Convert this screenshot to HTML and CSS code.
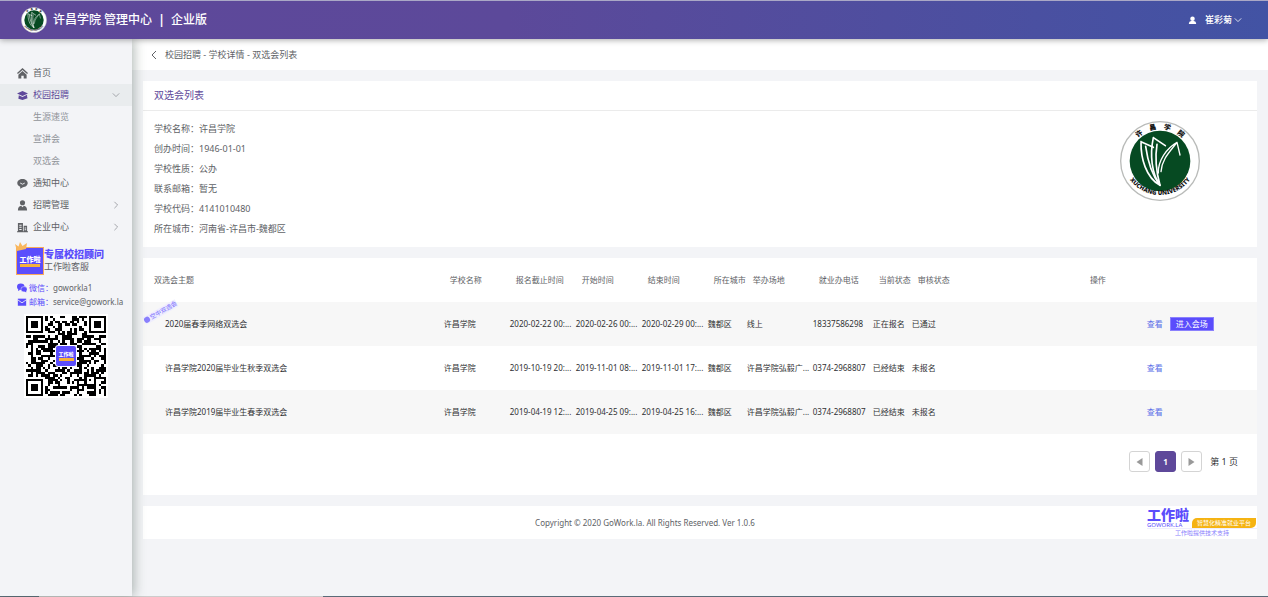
FILE: index.html
```html
<!DOCTYPE html>
<html lang="zh-CN">
<head>
    <meta charset="UTF-8">
    <meta name="viewport" content="width=device-width, initial-scale=1.0">
    <title>许昌学院 管理中心</title>
    <link rel="stylesheet" href="styles.css">
</head>
<body>
    <svg class="symbols" aria-hidden="true">
        <symbol id="seal" viewBox="60 46 240 244">
            <circle cx="180" cy="168" r="118" fill="#fff" stroke="#b9bbb9" stroke-width="4"/>
            <circle cx="180" cy="168" r="91" fill="#064a22"/>
            <g fill="none" stroke="#fff" stroke-linejoin="round" stroke-linecap="round">
                <path stroke-width="5" d="M123 110C122 160 138 218 180 241C154 208 143 168 137 124M123 110L160 127"/>
                <path stroke-width="5" d="M160 98C149 150 155 205 180 241C170 205 165 155 171 118M160 98L196 122"/>
                <path stroke-width="4" d="M175 204C174 165 200 130 231 112L240 150M231 112C212 138 186 160 183 200"/>
            </g>
            <path id="arcTop" fill="none" d="M84 168A96 96 0 0 1 276 168"/>
            <path id="arcBottom" fill="none" d="M68 158A112 112 0 1 0 292 158"/>
            <text class="seal-cn"><textPath href="#arcTop" startOffset="50%" text-anchor="middle">许　昌　学　院</textPath></text>
            <text class="seal-en"><textPath href="#arcBottom" startOffset="50%" text-anchor="middle">XUCHANG UNIVERSITY</textPath></text>
        </symbol>
        <symbol id="chevron" viewBox="0 0 10 10">
            <path d="M3 1L7 5L3 9" fill="none" stroke="currentColor"/>
        </symbol>
    </svg>

    <header class="header">
        <svg class="header-logo"><use href="#seal"/></svg>
        <h1>许昌学院 管理中心 <span class="divider">|</span> 企业版</h1>
        <button class="user" type="button">
            <svg class="user-icon" viewBox="0 0 10 10"><circle cx="5" cy="3" r="2.5"/><path d="M1 9V8Q1 6 3.500 5.500H6.500Q9 6 9 8V9Z"/></svg>
            <span>崔彩菊</span>
            <svg class="arrow down"><use href="#chevron"/></svg>
        </button>
    </header>

    <div class="layout">
        <aside class="sidebar">
            <nav class="menu">
                <a href="#"><svg class="icon" viewBox="0 0 12 12"><path d="M6 0L12 5.500L11 6.600L6 2.200L1 6.600L0 5.500ZM6 3.400L10.500 7.300V11.500H7.300V8.500H4.700V11.500H1.500V7.300Z"/></svg>首页</a>
                <a href="#" class="active"><svg class="icon" viewBox="0 0 12 12"><path d="M6 1L12 3.800L6 6.600L0 3.800ZM2 5.600L6 7.500L11 5.200V7L11.500 9L6 11L1.500 9.500Z"/></svg>校园招聘<svg class="arrow down"><use href="#chevron"/></svg></a>
                <a href="#" class="sub">生源速览</a>
                <a href="#" class="sub">宣讲会</a>
                <a href="#" class="sub">双选会</a>
                <a href="#"><svg class="icon" viewBox="0 0 12 12"><path d="M6 1C9.300 1 11.700 3 11.700 5.500S9.300 10 6.500 10L3.500 11.700V9.500C1.500 8.700 .3 7.200 .3 5.500C.3 3 2.700 1 6 1Z"/><path d="M3.500 5.500Q6 8 8.500 5.500" fill="none" stroke="#f3f4f7"/></svg>通知中心</a>
                <a href="#"><svg class="icon" viewBox="0 0 12 12"><circle cx="6" cy="3" r="2.800"/><path d="M1 11.500C1 8 2.500 6.500 4.500 6.200L6 8L7.500 6.200C9.500 6.500 11 8 11 11.500Z"/></svg>招聘管理<svg class="arrow"><use href="#chevron"/></svg></a>
                <a href="#"><svg class="icon" viewBox="0 0 12 12"><path fill-rule="evenodd" d="M1 1H6.500V10H7.300V4H11V10H12V11.300H0V10H1ZM2.500 3V4H5V3ZM2.500 5.300V6.300H5V5.300ZM2.500 7.600V8.600H5V7.600ZM8.400 6V7H10V6ZM8.400 8V9H10V8Z"/></svg>企业中心<svg class="arrow"><use href="#chevron"/></svg></a>
            </nav>

            <section class="advisor">
                <div class="advisor-head">
                    <div class="advisor-logo">
                        <svg class="crown" viewBox="0 0 13 9"><path fill="#f9b65c" d="M2 9L0 2L3.500 4.500L5 0L7.500 4L12 1L11 7Z"/></svg>
                        <b>工作啦</b><i></i>
                    </div>
                    <div>
                        <strong>专属校招顾问</strong>
                        <p>工作啦客服</p>
                    </div>
                </div>
                <p class="contact"><svg class="icon" viewBox="0 0 12 12"><ellipse cx="4.500" cy="4.500" rx="4.500" ry="3.800"/><path d="M1.500 7L1.300 9.500L4 8Z"/><ellipse cx="8.500" cy="7.500" rx="3.800" ry="3.200" stroke="#f3f4f7" stroke-width=".6"/><path d="M9 10L11 11.500V9Z"/></svg><span>微信：</span>goworkla1</p>
                <p class="contact"><svg class="icon" viewBox="0 0 12 12"><rect x="1" y="2" width="10" height="8.500"/><path d="M1 3.500L6 7L11 3.500" fill="none" stroke="#f3f4f7"/></svg><span>邮箱：</span>service@gowork.la</p>
                <div class="qr">
                    <svg viewBox="0 0 33 33" shape-rendering="crispEdges"><path id="qrModules"/></svg>
                    <div class="qr-logo"><b>工作啦</b><i></i></div>
                </div>
            </section>
        </aside>

        <main class="main">
            <div class="breadcrumb">
                <a href="#" aria-label="返回"><svg class="arrow back"><use href="#chevron"/></svg></a>
                <span>校园招聘 - 学校详情 - 双选会列表</span>
            </div>

            <section class="card">
                <h2>双选会列表</h2>
                <div class="school">
                    <dl>
                        <div><dt>学校名称：</dt><dd>许昌学院</dd></div>
                        <div><dt>创办时间：</dt><dd>1946-01-01</dd></div>
                        <div><dt>学校性质：</dt><dd>公办</dd></div>
                        <div><dt>联系邮箱：</dt><dd>暂无</dd></div>
                        <div><dt>学校代码：</dt><dd>4141010480</dd></div>
                        <div><dt>所在城市：</dt><dd>河南省-许昌市-魏都区</dd></div>
                    </dl>
                    <svg class="school-logo"><use href="#seal"/></svg>
                </div>
            </section>

            <section class="card">
                <table class="fairs">
                    <colgroup>
                        <col class="col-title"><col class="col-m"><col class="col-m"><col class="col-m"><col class="col-m">
                        <col class="col-s"><col class="col-m"><col class="col-phone"><col class="col-s"><col class="col-s"><col>
                    </colgroup>
                    <thead>
                        <tr>
                            <th>双选会主题</th>
                            <th>学校名称</th>
                            <th>报名截止时间</th>
                            <th>开始时间</th>
                            <th>结束时间</th>
                            <th>所在城市</th>
                            <th>举办场地</th>
                            <th>就业办电话</th>
                            <th>当前状态</th>
                            <th>审核状态</th>
                            <th>操作</th>
                        </tr>
                    </thead>
                    <tbody>
                        <tr>
                            <td><span class="ribbon"><i></i>空中双选会</span>2020届春季网络双选会</td>
                            <td>许昌学院</td>
                            <td>2020-02-22 00:...</td>
                            <td>2020-02-26 00:...</td>
                            <td>2020-02-29 00:...</td>
                            <td>魏都区</td>
                            <td>线上</td>
                            <td>18337586298</td>
                            <td>正在报名</td>
                            <td>已通过</td>
                            <td><a href="#">查看</a><button class="enter" type="button">进入会场</button></td>
                        </tr>
                        <tr>
                            <td>许昌学院2020届毕业生秋季双选会</td>
                            <td>许昌学院</td>
                            <td>2019-10-19 20:...</td>
                            <td>2019-11-01 08:...</td>
                            <td>2019-11-01 17:...</td>
                            <td>魏都区</td>
                            <td>许昌学院弘毅广...</td>
                            <td>0374-2968807</td>
                            <td>已经结束</td>
                            <td>未报名</td>
                            <td><a href="#">查看</a></td>
                        </tr>
                        <tr>
                            <td>许昌学院2019届毕业生春季双选会</td>
                            <td>许昌学院</td>
                            <td>2019-04-19 12:...</td>
                            <td>2019-04-25 09:...</td>
                            <td>2019-04-25 16:...</td>
                            <td>魏都区</td>
                            <td>许昌学院弘毅广...</td>
                            <td>0374-2968807</td>
                            <td>已经结束</td>
                            <td>未报名</td>
                            <td><a href="#">查看</a></td>
                        </tr>
                    </tbody>
                </table>
                <div class="pagination">
                    <button type="button" aria-label="上一页"><svg viewBox="0 0 8 10"><path d="M7 1V9L1 5Z"/></svg></button>
                    <button type="button" class="current">1</button>
                    <button type="button" aria-label="下一页"><svg viewBox="0 0 8 10"><path d="M1 1V9L7 5Z"/></svg></button>
                    <span>第 1 页</span>
                </div>
            </section>

            <footer class="card footer">
                <p>Copyright © 2020 GoWork.la. All Rights Reserved. Ver 1.0.6</p>
                <div class="support">
                    <div class="support-top">
                        <div class="brand"><b>工作啦</b><small>GOWORK.LA</small></div>
                        <span class="slogan">智慧化精准就业平台</span>
                    </div>
                    <div class="support-text">工作啦提供技术支持</div>
                </div>
            </footer>
        </main>
    </div>

    <script src="qr.js"></script>
</body>
</html>
```
FILE: styles.css
```css
* {
    box-sizing: border-box;
}

body {
    margin: 0;
    min-height: 100vh;
    display: flex;
    flex-direction: column;
    background-color: #f3f4f7;
    color: #606266;
    font-family: "Noto Sans", "Noto Sans CJK SC", sans-serif;
    font-size: 9px;
    line-height: 12px;
}

h1, h2, p, dl, dd {
    margin: 0;
}

a {
    color: inherit;
    text-decoration: none;
}

button {
    font-family: inherit;
    cursor: pointer;
}

.symbols {
    position: absolute;
    width: 0;
    height: 0;
}

.seal-cn {
    font-size: 21px;
    font-weight: 900;
    fill: #111;
}

.seal-en {
    font-size: 18px;
    font-weight: 900;
    fill: #111;
}

.arrow {
    width: 8px;
    height: 8px;
}

.arrow.down {
    transform: rotate(90deg);
}

.arrow.back {
    width: 10px;
    height: 10px;
    transform: rotate(180deg);
    display: block;
}

/* header */
.header {
    height: 39px;
    display: flex;
    align-items: center;
    padding: 0 26px 0 21px;
    border-top: 1px solid #aaa8c6;
    background: linear-gradient(90deg, #5e489a 0%, #5c499a 40%, #4253a4 100%);
    box-shadow: 0 1px 6px rgba(0, 0, 0, 0.35);
    color: #fff;
    position: relative;
    z-index: 2;
}

.header-logo {
    width: 26px;
    height: 26px;
    margin-right: 6px;
}

.header h1 {
    flex: 1;
    font-size: 12px;
    font-weight: 500;
    line-height: 16px;
}

.divider {
    margin: 0 3px;
    font-weight: 700;
}

.user {
    display: flex;
    align-items: center;
    padding: 0;
    border: 0;
    background: none;
    color: #fff;
    font-size: 9px;
    font-weight: 500;
    line-height: 12px;
}

.user-icon {
    width: 9px;
    height: 9px;
    margin-right: 8px;
    fill: #fff;
}

.user .arrow {
    margin-left: 2px;
}

/* sidebar */
.layout {
    flex: 1;
    display: flex;
    border-bottom: 1px solid;
    border-image: linear-gradient(90deg, #5a6b78 40px, #ccc 40px, #ccc 323px, #5a6b78 323px) 1;
}

.sidebar {
    width: 132px;
    flex-shrink: 0;
    padding-top: 23px;
    background-color: #f3f4f7;
    box-shadow: 2px 0 11px rgba(60, 80, 70, 0.4);
    position: relative;
    z-index: 1;
}

.icon {
    width: 11px;
    height: 11px;
    margin-right: 5px;
    fill: currentColor;
    flex-shrink: 0;
}

.menu a {
    display: flex;
    align-items: center;
    height: 22px;
    padding: 0 12px 0 17px;
}

.menu .arrow {
    margin-left: auto;
    color: #909399;
}

.menu .active {
    background-color: #e9ecee;
    color: #5e489a;
}

.menu .sub {
    padding-left: 33px;
    color: #909399;
}

.advisor-head {
    display: flex;
    padding: 9px 0 0 16px;
}

.advisor-head strong {
    display: block;
    color: #5b4dfc;
    font-size: 10px;
    font-weight: 900;
    line-height: 14px;
}

.advisor-logo,
.qr-logo {
    display: flex;
    flex-direction: column;
    align-items: center;
    justify-content: center;
    background-color: #5b4dfc;
    color: #fff;
    line-height: 9px;
}

.advisor-logo {
    width: 28px;
    height: 28px;
    border: 1px solid #f9a95c;
    font-size: 7px;
    position: relative;
}

.advisor-logo b,
.qr-logo b {
    font-weight: 900;
}

.advisor-logo i,
.qr-logo i {
    width: 75%;
    height: 3px;
    background-color: #f5b13c;
}

.crown {
    position: absolute;
    top: -6px;
    left: -2px;
    width: 13px;
    height: 9px;
}

.contact {
    display: flex;
    align-items: center;
    height: 14px;
    padding-left: 17px;
    font-size: 8px;
}

.contact .icon {
    width: 10px;
    height: 10px;
    margin-right: 2px;
    color: #5b4dfc;
}

.contact span {
    color: #5b4dfc;
}

.advisor-head + .contact {
    margin-top: 6px;
}

.qr {
    width: 84px;
    height: 84px;
    margin: 5px 0 0 24px;
    padding: 2px;
    background-color: #fff;
    display: grid;
    place-items: center;
}

.qr > * {
    grid-area: 1 / 1;
}

.qr svg {
    width: 80px;
    height: 80px;
}

.qr-logo {
    width: 22px;
    height: 22px;
    border: 1px solid #fff;
    border-radius: 3px;
    font-size: 5px;
    line-height: 7px;
}

/* content */
.main {
    flex: 1;
    min-width: 0;
}

.breadcrumb {
    display: flex;
    align-items: center;
    gap: 6px;
    height: 31px;
    padding-left: 17px;
    background-color: #fff;
}

.card {
    margin: 11px 11px 0;
    background-color: #fff;
}

.card h2 {
    padding: 0 11px;
    border-bottom: 1px solid #ebebeb;
    color: #5e489a;
    font-size: 10px;
    font-weight: 400;
    line-height: 29px;
}

.school {
    display: flex;
    justify-content: space-between;
    padding: 8px 57px 8px 11px;
}

.school dl div {
    display: flex;
    line-height: 20px;
}

.school dt {
    white-space: nowrap;
}

.school-logo {
    width: 80px;
    height: 82px;
    margin-top: 1px;
}

/* table */
.fairs {
    width: 100%;
    table-layout: fixed;
    border-collapse: collapse;
    font-size: 8px;
}

.col-title {
    width: 27%;
}

.col-m {
    width: 66px;
}

.col-s {
    width: 39px;
}

.col-phone {
    width: 60px;
}

.fairs th,
.fairs td {
    height: 44px;
    padding: 0;
    text-align: left;
    white-space: nowrap;
}

.fairs th {
    padding-left: 6px;
    font-weight: 400;
}

.fairs th:first-child {
    padding-left: 11px;
}

.fairs th:last-child {
    text-align: center;
    padding: 0 12px 0 0;
}

.fairs td {
    color: #303133;
}

.fairs td:first-child {
    padding-left: 22px;
    position: relative;
}

.fairs td:last-child {
    padding-left: 196px;
}

.fairs tbody tr:nth-child(odd) {
    background-color: #f7f7f7;
}

.fairs a {
    color: #5b6fe8;
}

.enter {
    height: 14px;
    margin-left: 7px;
    padding: 0 5px;
    border: 1px solid #8a80fd;
    background-color: #5b4dfc;
    color: #fff;
    font-size: 8px;
    line-height: 12px;
}

.ribbon {
    position: absolute;
    top: 6px;
    left: -1px;
    display: flex;
    align-items: center;
    gap: 1px;
    background-color: #efeefe;
    color: #8a80fd;
    font-size: 6px;
    font-weight: 500;
    line-height: 8px;
    transform: rotate(-30deg);
}

.ribbon i {
    width: 6px;
    height: 6px;
    border-radius: 50%;
    background-color: #8a80fd;
}

.pagination {
    display: flex;
    align-items: center;
    justify-content: flex-end;
    gap: 5px;
    padding: 17px 19px 23px 0;
    color: #303133;
}

.pagination button {
    width: 21px;
    height: 21px;
    padding: 0;
    border: 1px solid #d4d4d4;
    border-radius: 3px;
    background-color: #fff;
    font-size: 8px;
    font-weight: 700;
}

.pagination svg {
    width: 9px;
    height: 10px;
    display: block;
    margin: 0 auto;
    fill: #999;
}

.pagination .current {
    border-color: #5e489a;
    background-color: #5e489a;
    color: #fff;
}

.pagination span {
    margin-left: 3px;
}

/* footer */
.footer {
    display: flex;
    align-items: center;
    height: 33px;
    font-size: 8px;
}

.footer p {
    flex: 1;
    text-align: center;
}

.support {
    width: 110px;
    color: #5b4dfc;
}

.support-top {
    display: flex;
    align-items: flex-end;
    gap: 3px;
    border-bottom: 1px solid #efeefe;
}

.brand b {
    display: block;
    font-size: 14px;
    font-weight: 900;
    line-height: 15px;
}

.brand small {
    display: block;
    font-size: 6px;
    line-height: 6px;
}

.slogan {
    padding: 0 5px;
    border-radius: 5px 0 5px 0;
    background-color: #f5b312;
    color: #fff;
    font-size: 6px;
    line-height: 10px;
}

.support-text {
    color: #8a80fd;
    font-size: 6px;
    line-height: 9px;
    text-align: center;
}
```
FILE: qr.js
```js
// draws the code: three finder squares, one alignment square, data modules between
const size = 33;
let seed = 2020;
let d = "";

function random() {
    seed = (seed * 1103515245 + 12345) % 2147483648;
    return seed / 2147483648;
}

function square(x, y, cx, cy, r) {
    const dist = Math.max(Math.abs(x - cx), Math.abs(y - cy));
    if (dist > r) return null;
    return r === 4 ? dist === 3 || dist <= 1 : dist !== 1;
}

for (let y = 0; y < size; y++) {
    for (let x = 0; x < size; x++) {
        const fixed = [
            square(x, y, 3, 3, 4),
            square(x, y, size - 4, 3, 4),
            square(x, y, 3, size - 4, 4),
            square(x, y, size - 7, size - 7, 2)
        ].find(v => v !== null);
        const dark = random() < 0.52;
        if (fixed === undefined ? dark : fixed) d += `M${x} ${y}h1v1h-1z`;
    }
}

document.getElementById("qrModules").setAttribute("d", d);
```
